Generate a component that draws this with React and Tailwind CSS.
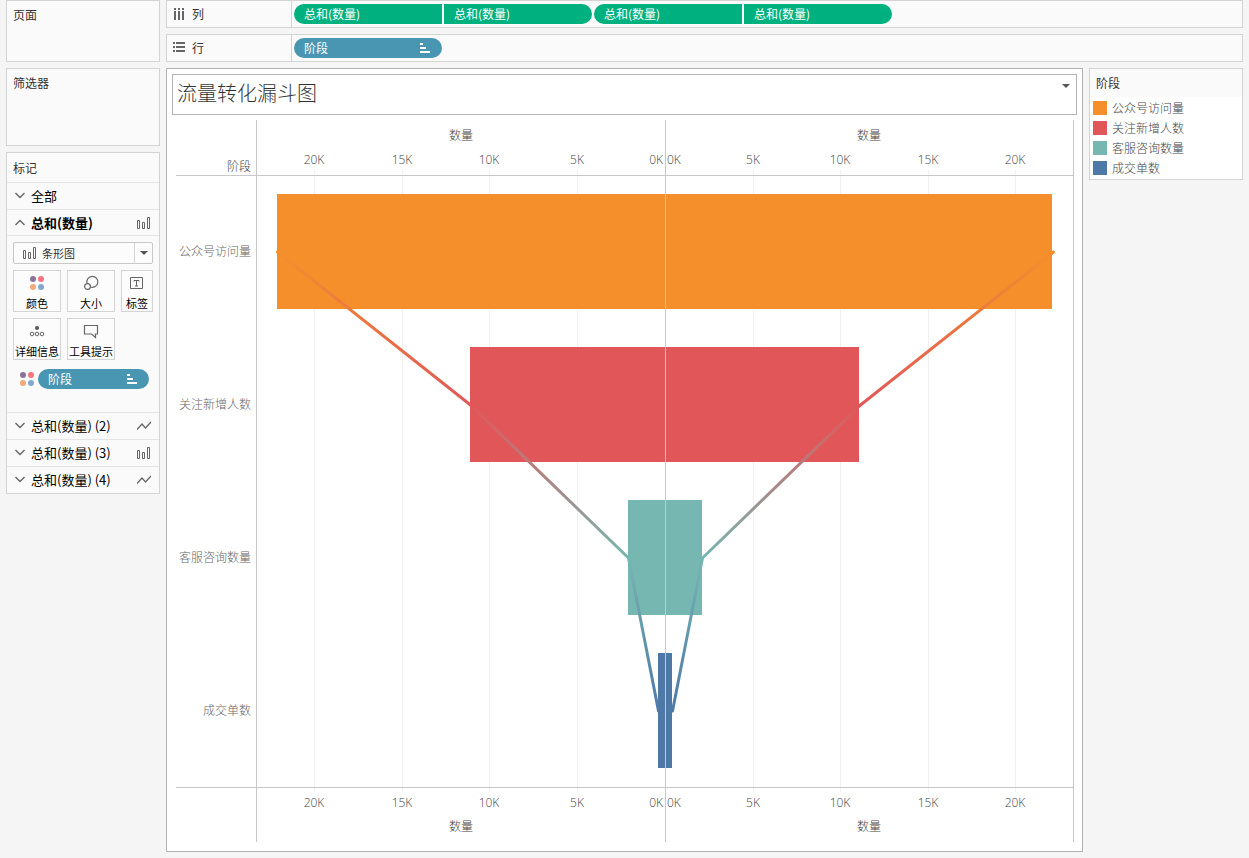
import React, { useState } from 'react';

const STAGES = [
  { name: '公众号访问量', value: 22150, color: '#f48f2c' },
  { name: '关注新增人数', value: 11120, color: '#e15759' },
  { name: '客服咨询数量', value: 2110, color: '#76b7b2' },
  { name: '成交单数', value: 400, color: '#4e79a7' },
];

// Chart geometry, in viewBox units
const ZERO = 493;
const PER_UNIT = 0.0175;
const FIRST_BAR = 79;
const BAR_HEIGHT = 115;
const ROW_HEIGHT = 153;
const TICKS = [5000, 10000, 15000, 20000];

const length = (value) => Math.round(value * PER_UNIT);
const leftTick = (value) => ZERO - 1 - Math.floor(value * PER_UNIT);
const middle = (row) => FIRST_BAR + row * ROW_HEIGHT + 58;

const SortIcon = () => (
  <svg className="h-2.5 w-2.5 shrink-0" viewBox="0 0 10 10" fill="currentColor" aria-hidden="true">
    <path d="M0 0h3v2H0zM0 4h6v2H0zM0 8h10v2H0z" />
  </svg>
);

const BarsIcon = () => (
  <svg className="h-3.5 w-3.5 shrink-0" viewBox="0 0 14 14" fill="none" stroke="#666" aria-hidden="true">
    <path d="M.5 4.500h2v8h-2zM5.500 6.500h2v6h-2zM10.500 1.500h2v11h-2z" />
  </svg>
);

const LineIcon = () => (
  <svg className="h-3.5 w-3.5 shrink-0" viewBox="0 0 14 14" fill="none" stroke="#666" strokeWidth="1.3" aria-hidden="true">
    <path d="M0 10.500L5 5l3.500 4L14 3" />
  </svg>
);

const Chevron = ({ open }) => (
  <svg className="h-2.5 w-2.5 shrink-0" viewBox="0 0 10 10" fill="none" stroke="#666" strokeWidth="1.4" aria-hidden="true">
    <path d={open ? 'M.5 7L5 2.500 9.500 7' : 'M.5 2L5 6.500 9.500 2'} />
  </svg>
);

const ColorDots = () => (
  <svg className="h-3.5 w-3.5 shrink-0" viewBox="0 0 14 14" aria-hidden="true">
    <circle cx="3" cy="3" r="3" fill="#8a739b" />
    <circle cx="11" cy="3" r="3" fill="#f8747f" />
    <circle cx="3" cy="11" r="3" fill="#f2a97c" />
    <circle cx="11" cy="11" r="3" fill="#84a7cf" />
  </svg>
);

const SizeIcon = () => (
  <svg className="h-4 w-4" viewBox="0 0 16 16" fill="none" stroke="#666" strokeWidth="1.2" aria-hidden="true">
    <path d="M4 8.200A5.500 5.500 0 1 1 7.500 12" />
    <circle cx="4.500" cy="11.500" r="2.900" />
  </svg>
);

const LabelIcon = () => (
  <svg className="h-4 w-4" viewBox="0 0 16 16" fill="none" stroke="#666" aria-hidden="true">
    <path d="M1.500 2.500h12v11h-12zM5 6.500v-1h5v1M7.500 5.500v5.500M6 11h3" />
  </svg>
);

const DetailIcon = () => (
  <svg className="h-4 w-4" viewBox="0 0 16 16" fill="none" stroke="#666" aria-hidden="true">
    <circle cx="8" cy="5" r="2" fill="#555" stroke="none" />
    <circle cx="3" cy="11" r="1.800" />
    <circle cx="8" cy="11" r="1.800" />
    <circle cx="13" cy="11" r="1.800" />
  </svg>
);

const TooltipIcon = () => (
  <svg className="h-4 w-4" viewBox="0 0 16 16" fill="none" stroke="#666" strokeWidth="1.2" aria-hidden="true">
    <path d="M1.500 2.500h13v8.500h-2v3.500L8.500 11h-7z" />
  </svg>
);

const ColumnsIcon = () => (
  <svg className="h-3 w-3 shrink-0" viewBox="0 0 12 12" fill="#666" aria-hidden="true">
    <path d="M1 0h2v2H1zM5 0h2v2H5zM9 0h2v2H9zM1 3h2v9H1zM5 3h2v9H5zM9 3h2v9H9z" />
  </svg>
);

const RowsIcon = () => (
  <svg className="h-3 w-3 shrink-0" viewBox="0 0 12 12" fill="#666" aria-hidden="true">
    <path d="M0 0h2v2H0zM0 4h2v2H0zM0 8h2v2H0zM3 0h9v2H3zM3 4h9v2H3zM3 8h9v2H3z" />
  </svg>
);

const Shelf = ({ icon, label, children }) => (
  <section className="flex h-7 border border-[#d4d4d4] bg-[#fafafa]">
    <h2 className="flex w-[125px] shrink-0 items-center gap-[7px] border-r border-[#d4d4d4] pl-1.5 text-xs">
      {icon}
      {label}
    </h2>
    <div className="flex items-center gap-0.5 pl-0.5">{children}</div>
  </section>
);

const MeasurePill = ({ end }) => (
  <button
    type="button"
    className={`flex h-5 w-[148px] items-center bg-[#00b180] pl-2.5 text-xs text-white ${end === 'left' ? 'rounded-l-full' : 'rounded-r-full'}`}
  >
    总和(数量)
  </button>
);

const MarkButton = ({ icon, label, narrow }) => (
  <button
    type="button"
    className={`flex h-[42px] flex-col items-center border border-[#d4d4d4] bg-[#fcfcfc] pt-1 text-[11px] leading-4 whitespace-nowrap text-black ${narrow ? 'w-8' : 'w-12'}`}
  >
    {icon}
    <span className="mt-1">{label}</span>
  </button>
);

const MarkRow = ({ label, icon, open, onClick }) => (
  <button
    type="button"
    aria-expanded={Boolean(open)}
    onClick={onClick}
    className={`flex w-full items-center border-t border-[#e4e4e4] px-2 text-[13px] text-black ${open ? 'h-[26px] font-bold' : 'h-[27px]'}`}
  >
    <Chevron open={open} />
    <span className="ml-1.5 flex-1 text-left">{label}</span>
    {icon}
  </button>
);

const FunnelChart = () => (
  <svg className="block w-full" viewBox="0 0 905 731" role="img" aria-label="流量转化漏斗图">
    <defs>
      {STAGES.slice(1).map((stage, i) => (
        <linearGradient key={stage.name} id={`step-${i}`} gradientUnits="userSpaceOnUse" x1="0" x2="0" y1={middle(i)} y2={middle(i + 1)}>
          <stop offset="0" stopColor={STAGES[i].color} />
          <stop offset="1" stopColor={stage.color} />
        </linearGradient>
      ))}
    </defs>

    {/* Grid lines */}
    <g fill="#f0f0f0">
      {TICKS.map((tick) => (
        <g key={tick}>
          <rect x={leftTick(tick)} y="55" width="1" height="622" />
          <rect x={ZERO + length(tick)} y="55" width="1" height="622" />
        </g>
      ))}
    </g>

    {/* Bars */}
    {STAGES.map((stage, i) => (
      <rect
        key={stage.name}
        x={ZERO - length(stage.value)}
        y={FIRST_BAR + i * ROW_HEIGHT}
        width={length(stage.value * 2)}
        height={BAR_HEIGHT}
        fill={stage.color}
      />
    ))}

    {/* Lines between the stages, one on each side */}
    <g strokeWidth="3" strokeLinecap="round">
      {STAGES.slice(1).map((stage, i) =>
        [-1, 1].map((side) => (
          <line
            key={`${stage.name}${side}`}
            x1={ZERO + 0.5 + side * length(STAGES[i].value)}
            y1={middle(i)}
            x2={ZERO + 0.5 + side * length(stage.value)}
            y2={middle(i + 1)}
            stroke={`url(#step-${i})`}
          />
        ))
      )}
    </g>

    {/* Frame */}
    <g fill="#c8c8c8">
      <rect x="84" y="5" width="1" height="722" />
      <rect x={ZERO} y="5" width="1" height="722" />
      <rect x="901" y="5" width="1" height="722" />
      <rect x="4" y="60" width="897" height="1" />
      <rect x="4" y="672" width="897" height="1" />
    </g>

    {/* Labels */}
    <g fontSize="12" fill="#444" className="font-light">
      <text x="79" y="56" textAnchor="end">阶段</text>
      {STAGES.map((stage, i) => (
        <text key={stage.name} x="79" y={middle(i) + 4} textAnchor="end" fill="#666">
          {stage.name}
        </text>
      ))}
      {[25, 716].map((y) => (
        <g key={y} textAnchor="middle">
          <text x="289" y={y}>数量</text>
          <text x="697" y={y}>数量</text>
        </g>
      ))}
      {[49, 692].map((y) => (
        <g key={y} textAnchor="middle" className="font-['Open_Sans',sans-serif]">
          <text x={ZERO - 2} y={y} textAnchor="end">0K</text>
          <text x={ZERO + 2} y={y} textAnchor="start">0K</text>
          {TICKS.map((tick) => (
            <g key={tick}>
              <text x={leftTick(tick)} y={y}>{tick / 1000}K</text>
              <text x={ZERO + length(tick)} y={y}>{tick / 1000}K</text>
            </g>
          ))}
        </g>
      ))}
    </g>
  </svg>
);

const App = () => {
  const [open, setOpen] = useState(true);

  return (
    <div className="flex min-h-screen items-start gap-1.5 bg-[#f5f5f5] px-1.5 pb-1.5 font-['Noto_Sans_CJK_SC',sans-serif] text-[#333]">
      {/* Cards */}
      <aside className="flex w-[154px] shrink-0 flex-col gap-1.5 text-xs">
        <section className="h-[62px] border border-[#d4d4d4] bg-[#fafafa] px-1.5 py-1.5">
          <h2>页面</h2>
        </section>
        <section className="h-[78px] border border-[#d4d4d4] bg-[#fafafa] px-1.5 py-1.5">
          <h2>筛选器</h2>
        </section>
        <section className="border border-[#d4d4d4] bg-[#fafafa]">
          <h2 className="flex h-[29px] items-center px-1.5">标记</h2>
          <MarkRow label="全部" />
          <MarkRow label="总和(数量)" icon={<BarsIcon />} open={open} onClick={() => setOpen(!open)} />
          {open && (
            <div className="border-t border-[#e4e4e4] px-[6px] pt-1.5 pb-[23px]">
              <div className="relative">
                <select
                  aria-label="标记类型"
                  className="block h-[22px] w-full appearance-none rounded-[2px] border border-[#c8c8c8] bg-[#fcfcfc] pl-7 text-[11px] text-[#333]"
                >
                  <option>条形图</option>
                  <option>线</option>
                </select>
                <span className="pointer-events-none absolute inset-y-0 left-2.5 flex items-center">
                  <BarsIcon />
                </span>
                <span className="pointer-events-none absolute inset-y-px right-px flex w-[18px] items-center justify-center border-l border-[#d4d4d4]">
                  <svg className="h-1 w-2" viewBox="0 0 8 4" fill="#555" aria-hidden="true">
                    <path d="M0 0h8L4 4z" />
                  </svg>
                </span>
              </div>
              <div className="mt-1.5 flex flex-wrap gap-1.5">
                <MarkButton icon={<span className="flex h-4 items-center"><ColorDots /></span>} label="颜色" />
                <MarkButton icon={<SizeIcon />} label="大小" />
                <MarkButton icon={<LabelIcon />} label="标签" narrow />
                <MarkButton icon={<DetailIcon />} label="详细信息" />
                <MarkButton icon={<TooltipIcon />} label="工具提示" />
              </div>
              <div className="mt-[9px] flex items-center gap-1 pr-1 pl-[7px]">
                <ColorDots />
                <button type="button" className="flex h-5 flex-1 items-center justify-between rounded-full bg-[#4996b2] pr-3 pl-2.5 text-xs text-white">
                  阶段
                  <SortIcon />
                </button>
              </div>
            </div>
          )}
          <MarkRow label="总和(数量) (2)" icon={<LineIcon />} />
          <MarkRow label="总和(数量) (3)" icon={<BarsIcon />} />
          <MarkRow label="总和(数量) (4)" icon={<LineIcon />} />
        </section>
      </aside>

      <div className="flex min-w-0 flex-1 flex-col gap-1.5">
        <Shelf icon={<ColumnsIcon />} label="列">
          <MeasurePill end="left" />
          <MeasurePill end="right" />
          <MeasurePill end="left" />
          <MeasurePill end="right" />
        </Shelf>
        <Shelf icon={<RowsIcon />} label="行">
          <button type="button" className="flex h-5 w-[148px] items-center justify-between rounded-full bg-[#4996b2] pr-3 pl-2.5 text-xs text-white">
            阶段
            <SortIcon />
          </button>
        </Shelf>

        <div className="flex items-start gap-1.5">
          <main className="min-w-0 flex-1 border border-[#b3b3b3] bg-white p-[5px]">
            <div className="flex h-[41px] items-start justify-between border border-[#b3b3b3] pr-1.5 pl-1">
              <h1 className="text-xl leading-9 font-light">流量转化漏斗图</h1>
              <button type="button" aria-label="标题菜单" className="mt-[9px]">
                <svg className="block h-1 w-2" viewBox="0 0 8 4" fill="#555" aria-hidden="true">
                  <path d="M0 0h8L4 4z" />
                </svg>
              </button>
            </div>
            <FunnelChart />
          </main>

          {/* Legend */}
          <aside className="w-[154px] shrink-0 border border-[#d4d4d4] bg-white text-xs">
            <h2 className="bg-[#fafafa] px-1.5 py-1.5">阶段</h2>
            <ul className="py-px font-light text-[#444]">
              {STAGES.map((stage) => (
                <li key={stage.name} className="flex h-5 items-center gap-[5px] pl-[3px]">
                  <span className="h-3.5 w-3.5" style={{ backgroundColor: stage.color }} />
                  {stage.name}
                </li>
              ))}
            </ul>
          </aside>
        </div>
      </div>
    </div>
  );
};

export default App;
